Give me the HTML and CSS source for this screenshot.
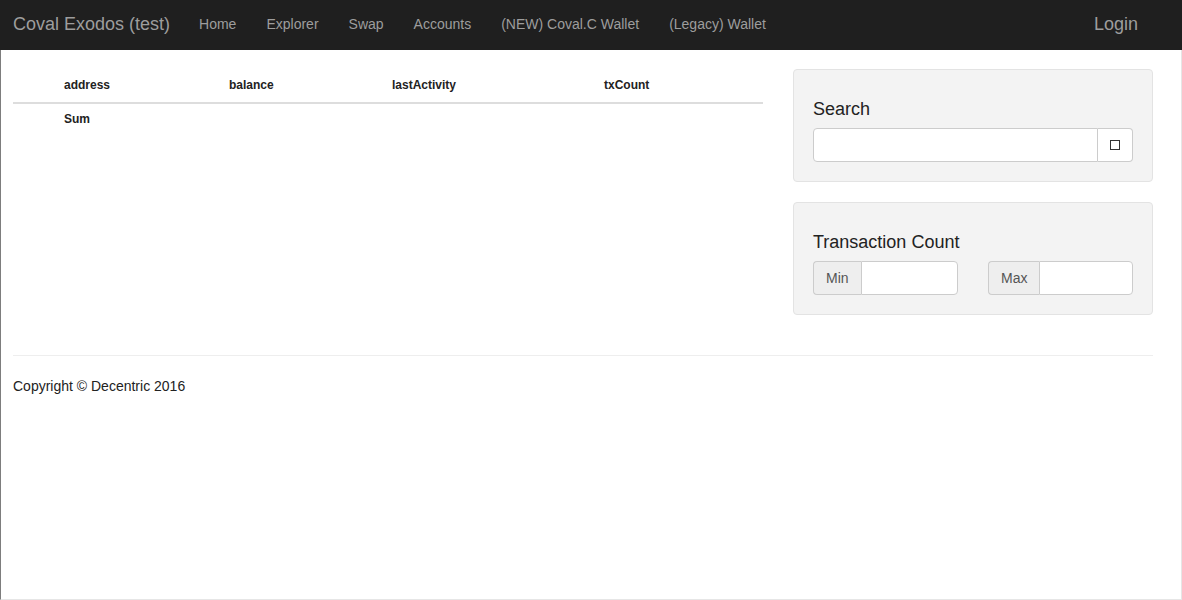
FILE: index.html
```html
<!DOCTYPE html>
<html>
<head>
<meta charset="utf-8">
<link rel="stylesheet" href="styles.css">
</head>
<body>
<nav class="navbar">
  <a class="brand">Coval Exodos (test)</a>
  <ul class="nav">
    <li>Home</li>
    <li>Explorer</li>
    <li>Swap</li>
    <li>Accounts</li>
    <li>(NEW) Coval.C Wallet</li>
    <li>(Legacy) Wallet</li>
  </ul>
  <a class="login">Login</a>
</nav>
<div class="frame">
  <div class="row">
    <div class="main-col">
      <table class="table">
        <thead>
          <tr><th class="c1">address</th><th class="c2">balance</th><th class="c3">lastActivity</th><th class="c4">txCount</th></tr>
        </thead>
        <tbody>
          <tr><th class="c1">Sum</th><td></td><td></td><td></td></tr>
        </tbody>
      </table>
    </div>
    <div class="side-col">
      <div class="well">
        <h4>Search</h4>
        <div class="input-group">
          <input class="form-control" type="text">
          <span class="btn"><span class="sq"></span></span>
        </div>
      </div>
      <div class="well">
        <h4>Transaction Count</h4>
        <div class="range">
          <div class="input-group small">
            <span class="addon">Min</span>
            <input class="form-control" type="text">
          </div>
          <div class="input-group small">
            <span class="addon">Max</span>
            <input class="form-control" type="text">
          </div>
        </div>
      </div>
    </div>
  </div>
  <footer class="footer">
    <hr>
    <p>Copyright © Decentric 2016</p>
  </footer>
</div>
</body>
</html>
```
FILE: styles.css
```css
* { box-sizing: border-box; }
html, body { margin: 0; padding: 0; }
body {
  font-family: "Liberation Sans", Arial, sans-serif;
  font-size: 14px;
  line-height: 1.42857;
  color: #333;
  background: #fff;
  width: 1182px;
  height: 600px;
  overflow: hidden;
}
.navbar {
  height: 50px;
  background: #1f1f1f;
  display: flex;
  align-items: center;
  padding: 0 14px 0 13px;
}
.brand {
  font-size: 18px;
  color: #9d9d9d;
  margin-right: 14px;
}
.nav {
  list-style: none;
  margin: 0;
  padding: 0;
  display: flex;
  flex: 1;
}
.nav li {
  color: #9d9d9d;
  font-size: 14px;
  padding: 0 15px;
}
.login {
  font-size: 18px;
  color: #9d9d9d;
  margin-right: 30px;
}
.frame {
  height: 550px;
  border-left: 1px solid #7d7d7d;
  border-right: 1px solid #e6e6e6;
  border-bottom: 1px solid #e6e6e6;
  padding: 0 28px 0 12px;
}
.row {
  display: flex;
  gap: 30px;
}
.main-col { width: 750px; padding-top: 19px; }
.side-col { width: 360px; padding-top: 19px; }
.table {
  width: 100%;
  border-collapse: collapse;
  font-size: 12px;
  color: #222;
}
.table th {
  font-weight: bold;
  text-align: left;
  padding: 8px 0;
  height: 32px;
}
.table thead th { border-bottom: 2px solid #ddd; vertical-align: bottom; }
.table tbody th, .table tbody td { height: 34px; padding: 7px 0 8px; vertical-align: top; }
.c1 { width: 216px; padding-left: 51px !important; }
.c2 { width: 163px; }
.c3 { width: 212px; }
.well {
  background: #f3f3f3;
  border: 1px solid #e3e3e3;
  border-radius: 4px;
  padding: 19px;
  margin-bottom: 20px;
}
.well h4 {
  font-size: 18px;
  font-weight: 500;
  color: #222;
  margin: 11px 0 8px;
  line-height: 1.1;
}
.input-group {
  display: flex;
  height: 34px;
}
.form-control {
  flex: 1;
  height: 34px;
  border: 1px solid #ccc;
  border-radius: 4px 0 0 4px;
  background: #fff;
  padding: 6px 12px;
  font: inherit;
  min-width: 0;
}
.btn {
  width: 35px;
  height: 34px;
  border: 1px solid #ccc;
  border-left: none;
  border-radius: 0 4px 4px 0;
  background: #fff;
  display: flex;
  align-items: center;
  justify-content: center;
}
.sq {
  width: 10px;
  height: 10px;
  border: 1.5px solid #333;
  display: block;
}
.range {
  display: flex;
  justify-content: space-between;
}
.input-group.small { width: 145px; }
.addon {
  background: #eee;
  border: 1px solid #ccc;
  border-right: none;
  border-radius: 4px 0 0 4px;
  padding: 6px 12px;
  color: #555;
  font-size: 14px;
  line-height: 20px;
}
.small .form-control { border-radius: 0 4px 4px 0; }
.footer hr {
  border: 0;
  border-top: 1px solid #eee;
  margin: 20px 0 21px;
}
.footer p { margin: 0; color: #222; }
```
